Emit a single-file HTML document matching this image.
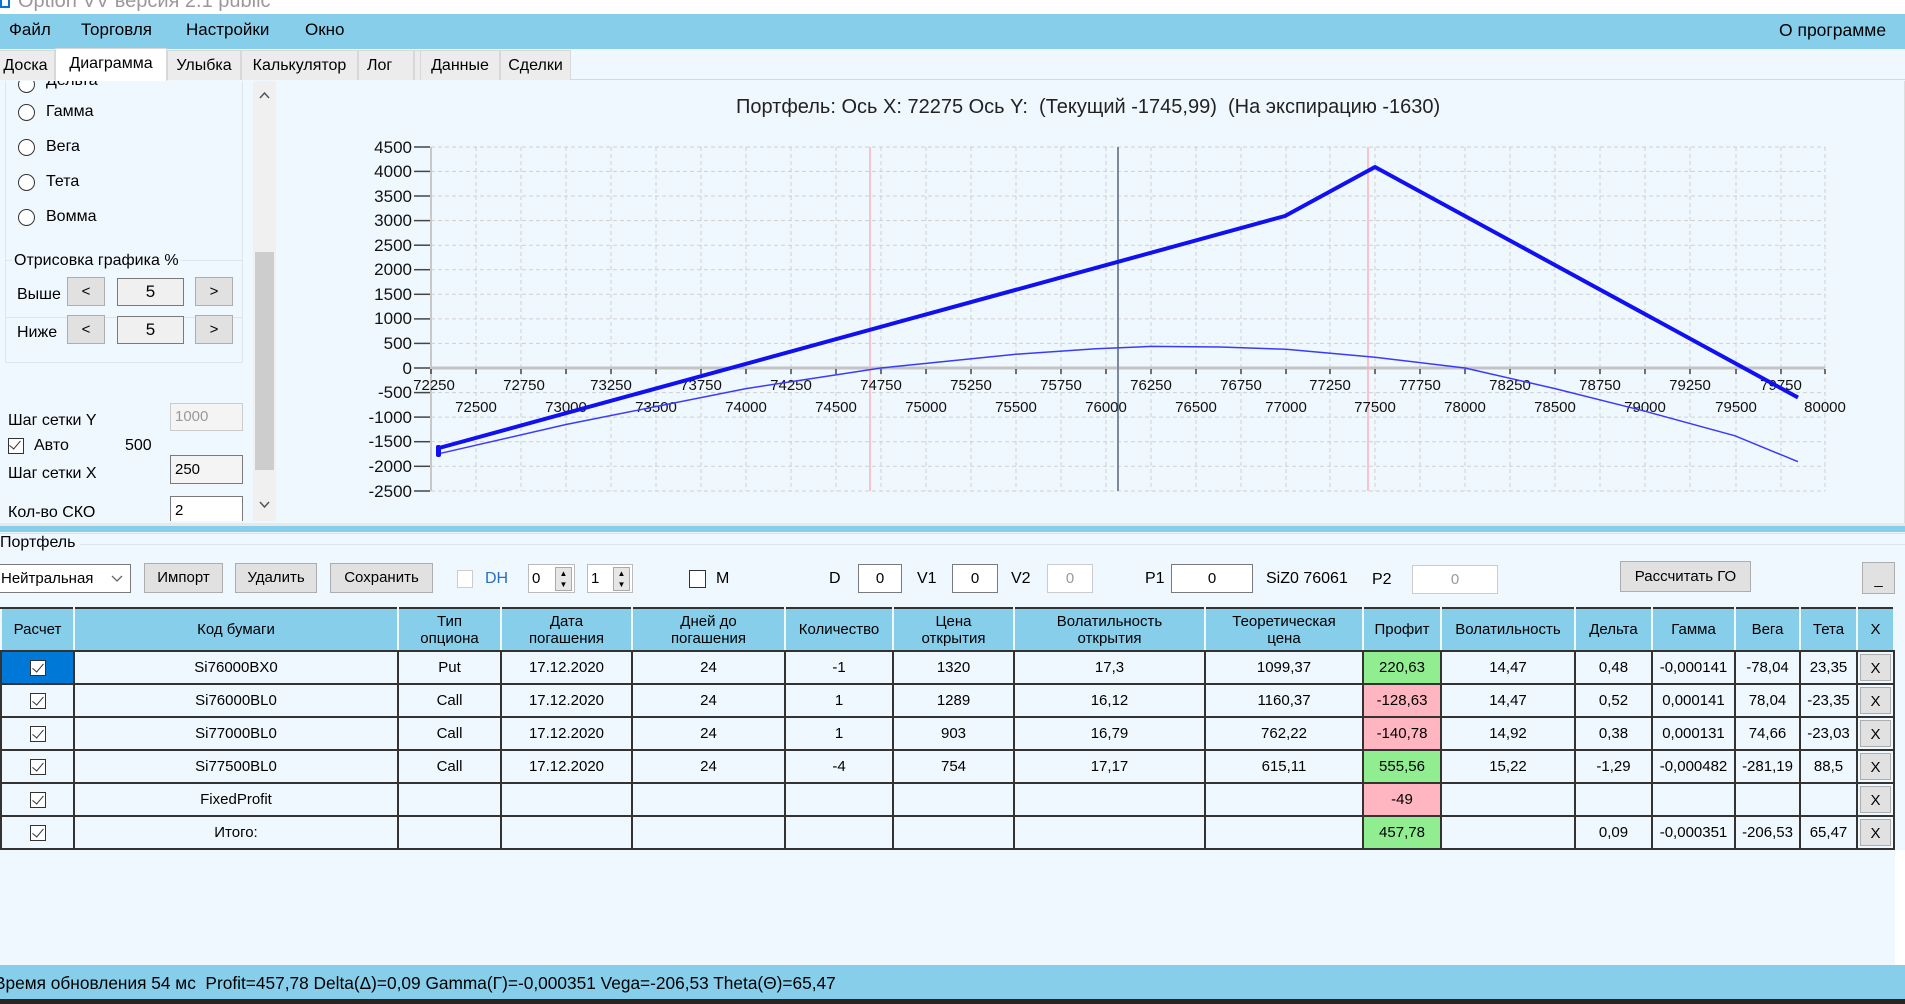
<!DOCTYPE html>
<html><head><meta charset="utf-8">
<style>
*{box-sizing:border-box;margin:0;padding:0}
body{width:1905px;height:1004px;overflow:hidden;background:#f0f8ff;font-family:"Liberation Sans",sans-serif;font-size:15px;color:#000;position:relative}
.a{position:absolute;white-space:nowrap}
.menu{left:0;top:14px;width:1905px;height:35px;background:#87ceeb}
.tab{position:absolute;top:50px;height:30px;background:#ececec;border:1px solid #d8d8d8;border-bottom:none;font-size:16px;line-height:30px;text-align:center}
.btn{position:absolute;background:#e1e1e1;border:1px solid #adadad;text-align:center;font-size:15px}
.tb{position:absolute;background:#fff;border:1px solid #7a7a7a;text-align:center;font-size:15px}
.tbd{position:absolute;background:#fff;border:1px solid #ccc;color:#999;text-align:center;font-size:15px}
.radio{position:absolute;width:17px;height:17px;border:1px solid #333;border-radius:50%;background:#fff}
.cb{position:absolute;width:16px;height:16px;border:1px solid #333;background:#fff}
table{position:absolute;left:0;top:607px;border-collapse:collapse;font-size:15px;table-layout:fixed}
td,th{border:2px solid #333;text-align:center;height:33px;padding:0;overflow:hidden;white-space:nowrap}
th{background:#87ceeb;font-weight:normal;line-height:17px;height:43px;border-color:#333 #f0f8ff;border-width:2px 2px 2px 2px}
td{background:#f0f8ff}
.g{background:#90ee90}.p{background:#ffb6c1}
.xb{background:#f0f8ff;padding:2px}
.xb span{display:block;background:#e1e1e1;border:1px solid #adadad;height:27px;line-height:27px}
.chk{display:inline-block;width:16px;height:16px;border:1px solid #333;background:#fff;vertical-align:middle;position:relative}
.chk:after{content:"";position:absolute;left:4px;top:0px;width:5px;height:10px;border:solid #333;border-width:0 1.5px 1.5px 0;transform:rotate(40deg)}
</style></head><body>

<div class="a" style="left:0;top:0;width:1905px;height:14px;background:#fff;overflow:hidden">
  <div class="a" style="left:0;top:-6px;width:10px;height:14px;border:2px solid #0078d7"></div>
  <div class="a" style="left:18px;top:-10px;font-size:20px;color:#999">Option VV версия 2.1 public</div>
</div>
<div class="a menu"></div>
<div class="a" style="left:9px;top:20px;font-size:17px">Файл</div>
<div class="a" style="left:81px;top:20px;font-size:17px">Торговля</div>
<div class="a" style="left:186px;top:20px;font-size:17px">Настройки</div>
<div class="a" style="left:305px;top:20px;font-size:17px">Окно</div>
<div class="a" style="left:1779px;top:20px;font-size:17.5px">О программе</div>

<div class="a" style="left:0;top:79px;width:1905px;height:1px;background:#d8d8d8"></div>
<div class="tab" style="left:-4px;width:59px">Доска</div>
<div class="tab" style="left:55px;width:112px;top:48px;height:33px;background:#fff;line-height:30px">Диаграмма</div>
<div class="tab" style="left:167px;width:74px">Улыбка</div>
<div class="tab" style="left:241px;width:117px">Калькулятор</div>
<div class="tab" style="left:358px;width:56px;text-align:left;padding-left:8px">Лог</div>
<div class="tab" style="left:414px;width:60px"></div>
<div class="tab" style="left:420px;width:80px">Данные</div>
<div class="tab" style="left:500px;width:71px">Сделки</div>

<div class="a" style="left:0;top:81px;width:253px;height:440px;overflow:hidden">
  <div class="a" style="left:5px;top:-20px;width:238px;height:257px;border:1px solid #dde6ee"></div>
  <div class="radio" style="left:18px;top:-5px"></div><div class="a" style="left:46px;top:-9px;font-size:16px">Дельта</div>
  <div class="radio" style="left:18px;top:23px"></div><div class="a" style="left:46px;top:22px;font-size:16px">Гамма</div>
  <div class="radio" style="left:18px;top:58px"></div><div class="a" style="left:46px;top:57px;font-size:16px">Вега</div>
  <div class="radio" style="left:18px;top:93px"></div><div class="a" style="left:46px;top:92px;font-size:16px">Тета</div>
  <div class="radio" style="left:18px;top:128px"></div><div class="a" style="left:46px;top:127px;font-size:16px">Вомма</div>

  <div class="a" style="left:5px;top:179px;width:238px;height:103px;border:1px solid #dde6ee"></div>
  <div class="a" style="left:12px;top:171px;font-size:16px;background:#f0f8ff;padding:0 2px">Отрисовка графика %</div>
  <div class="a" style="left:17px;top:205px;font-size:16px">Выше</div>
  <div class="btn" style="left:67px;top:196px;width:38px;height:29px;line-height:27px">&lt;</div>
  <div class="tb" style="left:117px;top:197px;width:67px;height:28px;line-height:26px;font-size:17px;background:#f0f0f0">5</div>
  <div class="btn" style="left:195px;top:196px;width:38px;height:29px;line-height:27px">&gt;</div>
  <div class="a" style="left:17px;top:243px;font-size:16px">Ниже</div>
  <div class="btn" style="left:67px;top:234px;width:38px;height:29px;line-height:27px">&lt;</div>
  <div class="tb" style="left:117px;top:235px;width:67px;height:28px;line-height:26px;font-size:17px;background:#f0f0f0">5</div>
  <div class="btn" style="left:195px;top:234px;width:38px;height:29px;line-height:27px">&gt;</div>

  <div class="a" style="left:8px;top:331px;font-size:16px">Шаг сетки Y</div>
  <div class="tbd" style="left:170px;top:322px;width:73px;height:28px;line-height:26px;text-align:left;padding-left:4px;background:#f4f4f4">1000</div>
  <div class="cb" style="left:8px;top:357px"><span class="chk" style="border:none;position:absolute;left:-1px;top:-1px;background:transparent"></span></div>
  <div class="a" style="left:34px;top:356px;font-size:16px">Авто</div>
  <div class="a" style="left:125px;top:356px;font-size:16px">500</div>
  <div class="a" style="left:8px;top:384px;font-size:16px">Шаг сетки X</div>
  <div class="tb" style="left:170px;top:374px;width:73px;height:29px;line-height:27px;text-align:left;padding-left:4px;background:#f4f4f4">250</div>
  <div class="a" style="left:8px;top:423px;font-size:16px">Кол-во СКО</div>
  <div class="tb" style="left:170px;top:415px;width:73px;height:29px;line-height:27px;text-align:left;padding-left:4px">2</div>
</div>
<div class="a" style="left:253px;top:81px;width:23px;height:440px;background:#f0f0f0"></div>
<div class="a" style="left:255px;top:252px;width:19px;height:218px;background:#cdcdcd"></div>
<svg class="a" style="left:253px;top:81px" width="23" height="440"><path d="M7 17 L11.5 12 L16 17" fill="none" stroke="#555" stroke-width="1.5"/><path d="M7 421 L11.5 426 L16 421" fill="none" stroke="#555" stroke-width="1.5"/></svg>

<div class="a" style="left:276px;top:81px;width:1629px;height:442px;background:#f0f8ff;border-right:1px solid #ddd"></div>
<div class="a" style="left:736px;top:96px;font-size:20px;color:#222">Портфель: Ось X: 72275 Ось Y:&nbsp; (Текущий -1745,99)&nbsp; (На экспирацию -1630)</div>
<svg class="a" style="left:0;top:0" width="1905" height="530" viewBox="0 0 1905 530">
<g stroke="#cfcfcf" stroke-dasharray="4,3" stroke-width="1">
<line x1="476" y1="147" x2="476" y2="491"/><line x1="521" y1="147" x2="521" y2="491"/><line x1="566" y1="147" x2="566" y2="491"/><line x1="611" y1="147" x2="611" y2="491"/><line x1="656" y1="147" x2="656" y2="491"/><line x1="701" y1="147" x2="701" y2="491"/><line x1="746" y1="147" x2="746" y2="491"/><line x1="791" y1="147" x2="791" y2="491"/><line x1="836" y1="147" x2="836" y2="491"/><line x1="881" y1="147" x2="881" y2="491"/><line x1="926" y1="147" x2="926" y2="491"/><line x1="971" y1="147" x2="971" y2="491"/><line x1="1016" y1="147" x2="1016" y2="491"/><line x1="1061" y1="147" x2="1061" y2="491"/><line x1="1106" y1="147" x2="1106" y2="491"/><line x1="1151" y1="147" x2="1151" y2="491"/><line x1="1196" y1="147" x2="1196" y2="491"/><line x1="1241" y1="147" x2="1241" y2="491"/><line x1="1286" y1="147" x2="1286" y2="491"/><line x1="1330" y1="147" x2="1330" y2="491"/><line x1="1375" y1="147" x2="1375" y2="491"/><line x1="1420" y1="147" x2="1420" y2="491"/><line x1="1465" y1="147" x2="1465" y2="491"/><line x1="1510" y1="147" x2="1510" y2="491"/><line x1="1555" y1="147" x2="1555" y2="491"/><line x1="1600" y1="147" x2="1600" y2="491"/><line x1="1645" y1="147" x2="1645" y2="491"/><line x1="1690" y1="147" x2="1690" y2="491"/><line x1="1736" y1="147" x2="1736" y2="491"/><line x1="1781" y1="147" x2="1781" y2="491"/><line x1="1825" y1="147" x2="1825" y2="491"/>
<line x1="431" y1="147" x2="1825" y2="147"/><line x1="431" y1="171.4" x2="1825" y2="171.4"/><line x1="431" y1="196" x2="1825" y2="196"/><line x1="431" y1="220.6" x2="1825" y2="220.6"/><line x1="431" y1="245.2" x2="1825" y2="245.2"/><line x1="431" y1="269.7" x2="1825" y2="269.7"/><line x1="431" y1="294.3" x2="1825" y2="294.3"/><line x1="431" y1="318.9" x2="1825" y2="318.9"/><line x1="431" y1="343.4" x2="1825" y2="343.4"/><line x1="431" y1="392.6" x2="1825" y2="392.6"/><line x1="431" y1="417.1" x2="1825" y2="417.1"/><line x1="431" y1="441.7" x2="1825" y2="441.7"/><line x1="431" y1="466.3" x2="1825" y2="466.3"/><line x1="431" y1="491" x2="1825" y2="491"/>
</g>
<line x1="431" y1="368" x2="1825" y2="368" stroke="#c4c4c4" stroke-width="3"/>
<line x1="431" y1="147" x2="431" y2="491" stroke="#c8c8c8" stroke-width="2"/>
<g stroke="#444" stroke-width="1.5">
<line x1="414" y1="147" x2="430" y2="147"/><line x1="414" y1="171.4" x2="430" y2="171.4"/><line x1="414" y1="196" x2="430" y2="196"/><line x1="414" y1="220.6" x2="430" y2="220.6"/><line x1="414" y1="245.2" x2="430" y2="245.2"/><line x1="414" y1="269.7" x2="430" y2="269.7"/><line x1="414" y1="294.3" x2="430" y2="294.3"/><line x1="414" y1="318.9" x2="430" y2="318.9"/><line x1="414" y1="343.4" x2="430" y2="343.4"/><line x1="414" y1="368" x2="430" y2="368"/><line x1="414" y1="392.6" x2="430" y2="392.6"/><line x1="414" y1="417.1" x2="430" y2="417.1"/><line x1="414" y1="441.7" x2="430" y2="441.7"/><line x1="414" y1="466.3" x2="430" y2="466.3"/><line x1="414" y1="491" x2="430" y2="491"/>
</g>
<path d="M431 369v5M476 369v5M521 369v5M566 369v5M611 369v5M656 369v5M701 369v5M746 369v5M791 369v5M836 369v5M881 369v5M926 369v5M971 369v5M1016 369v5M1061 369v5M1106 369v5M1151 369v5M1196 369v5M1241 369v5M1286 369v5M1330 369v5M1375 369v5M1420 369v5M1465 369v5M1510 369v5M1555 369v5M1600 369v5M1645 369v5M1690 369v5M1736 369v5M1781 369v5M1825 369v5" stroke="#444" stroke-width="1.5"/>
<line x1="870" y1="147" x2="870" y2="491" stroke="#ffb0b8" stroke-width="1.5"/>
<line x1="1368" y1="147" x2="1368" y2="491" stroke="#ffb0b8" stroke-width="1.5"/>
<line x1="1118" y1="147" x2="1118" y2="491" stroke="#7a8a9a" stroke-width="2"/>
<g font-family="Liberation Sans" font-size="17" fill="#111" text-anchor="end">
<text x="412" y="153">4500</text><text x="412" y="177">4000</text><text x="412" y="202">3500</text><text x="412" y="226">3000</text><text x="412" y="251">2500</text><text x="412" y="275">2000</text><text x="412" y="300">1500</text><text x="412" y="324">1000</text><text x="412" y="349">500</text><text x="412" y="374">0</text><text x="412" y="398">-500</text><text x="412" y="423">-1000</text><text x="412" y="447">-1500</text><text x="412" y="472">-2000</text><text x="412" y="497">-2500</text>
</g>
<g font-family="Liberation Sans" font-size="15" fill="#111" text-anchor="middle">
<text x="434" y="390">72250</text><text x="524" y="390">72750</text><text x="611" y="390">73250</text><text x="701" y="390">73750</text><text x="791" y="390">74250</text><text x="881" y="390">74750</text><text x="971" y="390">75250</text><text x="1061" y="390">75750</text><text x="1151" y="390">76250</text><text x="1241" y="390">76750</text><text x="1330" y="390">77250</text><text x="1420" y="390">77750</text><text x="1510" y="390">78250</text><text x="1600" y="390">78750</text><text x="1690" y="390">79250</text><text x="1781" y="390">79750</text>
<text x="476" y="412">72500</text><text x="566" y="412">73000</text><text x="656" y="412">73500</text><text x="746" y="412">74000</text><text x="836" y="412">74500</text><text x="926" y="412">75000</text><text x="1016" y="412">75500</text><text x="1106" y="412">76000</text><text x="1196" y="412">76500</text><text x="1286" y="412">77000</text><text x="1375" y="412">77500</text><text x="1465" y="412">78000</text><text x="1555" y="412">78500</text><text x="1645" y="412">79000</text><text x="1736" y="412">79500</text><text x="1825" y="412">80000</text>
</g>
<polyline points="439,453.7 566,424.5 746,388.6 881,368 1016,354.2 1096,348.8 1151,346.4 1220,347 1286,349.3 1375,357.2 1465,368 1555,388.6 1645,411.2 1735,435.8 1798,461.7" fill="none" stroke="#3a3aff" stroke-width="1.5"/>
<polyline points="439,448 1285,216 1375,167 1798,397.5" fill="none" stroke="#1010f0" stroke-width="4" stroke-linejoin="round"/>
<rect x="436" y="445" width="5" height="12" rx="2" fill="#1010f0"/>
</svg>

<div class="a" style="left:0;top:523px;width:1905px;height:3px;background:#e8e8e8"></div>
<div class="a" style="left:0;top:526px;width:1905px;height:6px;background:#87ceeb"></div>
<div class="a" style="left:0;top:533px;width:1905px;height:1px;background:#dde"></div>

<div class="a" style="left:0;top:534px;font-size:16px">Портфель</div>
<div class="a" style="left:80px;top:544px;width:1825px;height:1px;background:#dde6ee"></div>
<div class="tb" style="left:-2px;top:564px;width:133px;height:29px;line-height:27px;text-align:left;padding-left:2px;border-color:#7a7a7a">Нейтральная</div>
<svg class="a" style="left:110px;top:574px" width="14" height="10"><path d="M2 2 L7 7 L12 2" fill="none" stroke="#666" stroke-width="1.3"/></svg>
<div class="btn" style="left:144px;top:563px;width:79px;height:30px;line-height:28px">Импорт</div>
<div class="btn" style="left:235px;top:563px;width:82px;height:30px;line-height:28px">Удалить</div>
<div class="btn" style="left:330px;top:563px;width:103px;height:30px;line-height:28px">Сохранить</div>
<div class="a" style="left:457px;top:570px;width:16px;height:18px;border:1px solid #ccc;background:#fff"></div>
<div class="a" style="left:485px;top:570px;font-size:16px;color:#2a6ebb">DH</div>
<div class="tb" style="left:528px;top:564px;width:47px;height:29px;border-color:#bbb;text-align:left;padding-left:3px;line-height:27px">0</div>
<div class="a" style="left:555px;top:567px;width:17px;height:24px;background:#e6e6e6;border:1px solid #aaa;font-size:8px;line-height:11px;text-align:center">▲<br>▼</div>
<div class="tb" style="left:587px;top:564px;width:46px;height:29px;border-color:#bbb;text-align:left;padding-left:3px;line-height:27px">1</div>
<div class="a" style="left:613px;top:567px;width:17px;height:24px;background:#e6e6e6;border:1px solid #aaa;font-size:8px;line-height:11px;text-align:center">▲<br>▼</div>
<div class="a" style="left:689px;top:570px;width:17px;height:18px;border:1.5px solid #333;background:#fff"></div>
<div class="a" style="left:716px;top:570px;font-size:16px">M</div>
<div class="a" style="left:829px;top:570px;font-size:16px">D</div>
<div class="tb" style="left:858px;top:564px;width:44px;height:29px;line-height:27px">0</div>
<div class="a" style="left:917px;top:570px;font-size:16px">V1</div>
<div class="tb" style="left:952px;top:564px;width:46px;height:29px;line-height:27px">0</div>
<div class="a" style="left:1011px;top:570px;font-size:16px">V2</div>
<div class="tbd" style="left:1047px;top:564px;width:46px;height:29px;line-height:27px">0</div>
<div class="a" style="left:1145px;top:570px;font-size:16px">P1</div>
<div class="tb" style="left:1171px;top:564px;width:82px;height:29px;line-height:27px">0</div>
<div class="a" style="left:1266px;top:570px;font-size:16px">SiZ0 76061</div>
<div class="a" style="left:1372px;top:571px;font-size:16px">P2</div>
<div class="tbd" style="left:1412px;top:565px;width:86px;height:29px;line-height:27px">0</div>
<div class="btn" style="left:1620px;top:561px;width:131px;height:31px;line-height:29px">Рассчитать ГО</div>
<div class="btn" style="left:1862px;top:562px;width:33px;height:32px;line-height:34px">_</div>

<table>
<colgroup><col style="width:73px"><col style="width:324px"><col style="width:103px"><col style="width:131px"><col style="width:153px"><col style="width:108px"><col style="width:121px"><col style="width:191px"><col style="width:158px"><col style="width:78px"><col style="width:134px"><col style="width:77px"><col style="width:83px"><col style="width:65px"><col style="width:57px"><col style="width:37px"></colgroup>
<tr><th>Расчет</th><th>Код бумаги</th><th>Тип<br>опциона</th><th>Дата<br>погашения</th><th>Дней до<br>погашения</th><th>Количество</th><th>Цена<br>открытия</th><th>Волатильность<br>открытия</th><th>Теоретическая<br>цена</th><th>Профит</th><th>Волатильность</th><th>Дельта</th><th>Гамма</th><th>Вега</th><th>Тета</th><th>X</th></tr>
<tr><td style="background:#0078d7"><span class="chk"></span></td><td>Si76000BX0</td><td>Put</td><td>17.12.2020</td><td>24</td><td>-1</td><td>1320</td><td>17,3</td><td>1099,37</td><td class="g">220,63</td><td>14,47</td><td>0,48</td><td>-0,000141</td><td>-78,04</td><td>23,35</td><td class="xb"><span>X</span></td></tr>
<tr><td><span class="chk"></span></td><td>Si76000BL0</td><td>Call</td><td>17.12.2020</td><td>24</td><td>1</td><td>1289</td><td>16,12</td><td>1160,37</td><td class="p">-128,63</td><td>14,47</td><td>0,52</td><td>0,000141</td><td>78,04</td><td>-23,35</td><td class="xb"><span>X</span></td></tr>
<tr><td><span class="chk"></span></td><td>Si77000BL0</td><td>Call</td><td>17.12.2020</td><td>24</td><td>1</td><td>903</td><td>16,79</td><td>762,22</td><td class="p">-140,78</td><td>14,92</td><td>0,38</td><td>0,000131</td><td>74,66</td><td>-23,03</td><td class="xb"><span>X</span></td></tr>
<tr><td><span class="chk"></span></td><td>Si77500BL0</td><td>Call</td><td>17.12.2020</td><td>24</td><td>-4</td><td>754</td><td>17,17</td><td>615,11</td><td class="g">555,56</td><td>15,22</td><td>-1,29</td><td>-0,000482</td><td>-281,19</td><td>88,5</td><td class="xb"><span>X</span></td></tr>
<tr><td><span class="chk"></span></td><td>FixedProfit</td><td></td><td></td><td></td><td></td><td></td><td></td><td></td><td class="p">-49</td><td></td><td></td><td></td><td></td><td></td><td class="xb"><span>X</span></td></tr>
<tr><td><span class="chk"></span></td><td>Итого:</td><td></td><td></td><td></td><td></td><td></td><td></td><td></td><td class="g">457,78</td><td></td><td>0,09</td><td>-0,000351</td><td>-206,53</td><td>65,47</td><td class="xb"><span>X</span></td></tr>
</table>

<div class="a" style="left:1895px;top:850px;width:10px;height:116px;background:#fff"></div>
<div class="a" style="left:0;top:965px;width:1905px;height:34px;background:#87ceeb"></div>
<div class="a" style="left:-6px;top:973px;font-size:17.3px">Время обновления 54 мс&nbsp; Profit=457,78 Delta(Δ)=0,09 Gamma(Γ)=-0,000351 Vega=-206,53 Theta(Θ)=65,47</div>
<div class="a" style="left:0;top:999px;width:1905px;height:5px;background:#2a2422"></div>
</body></html>
